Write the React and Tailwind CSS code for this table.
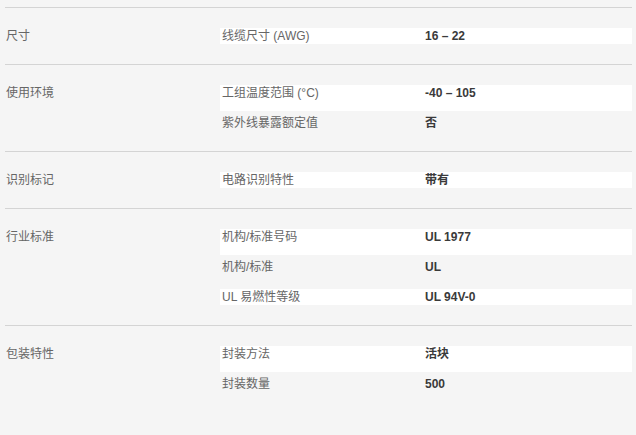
import React from "react";

const sections = [
  { title: "尺寸", rows: [["线缆尺寸 (AWG)", "16 – 22"]] },
  {
    title: "使用环境",
    rows: [
      ["工组温度范围 (°C)", "-40 – 105"],
      ["紫外线暴露额定值", "否"],
    ],
  },
  { title: "识别标记", rows: [["电路识别特性", "带有"]] },
  {
    title: "行业标准",
    rows: [
      ["机构/标准号码", "UL 1977"],
      ["机构/标准", "UL"],
      ["UL 易燃性等级", "UL 94V-0"],
    ],
  },
  {
    title: "包装特性",
    rows: [
      ["封装方法", "活块"],
      ["封装数量", "500"],
    ],
  },
];

export default function App() {
  return (
    <div
      className="h-[435px] w-full overflow-hidden bg-[#f5f5f5] pt-[7px] pl-[5px] pr-[4px] text-[12px] leading-[16px]"
      style={{ fontFamily: '"Liberation Sans", "Noto Sans CJK SC", sans-serif' }}
    >
      <div className="border-t border-[#d4d4d4]">
        {sections.map((section, i) => (
          <div
            key={section.title}
            className={`flex py-5 ${i < sections.length - 1 ? "border-b border-[#d4d4d4]" : ""}`}
          >
            <div className="w-[215px] shrink-0 pl-[1px] text-[#666]">{section.title}</div>
            <ul className="flex flex-1 flex-col gap-1">
              {section.rows.map(([name, value], j) => (
                <li
                  key={name}
                  className={`flex ${j % 2 === 0 ? "bg-white" : ""} ${j < section.rows.length - 1 ? "pb-[10px]" : ""}`}
                >
                  <span className="w-[205px] shrink-0 pl-[2px] text-[#666]">{name}</span>
                  <span className="font-bold text-[#3a3a3a]">{value}</span>
                </li>
              ))}
            </ul>
          </div>
        ))}
      </div>
    </div>
  );
}
